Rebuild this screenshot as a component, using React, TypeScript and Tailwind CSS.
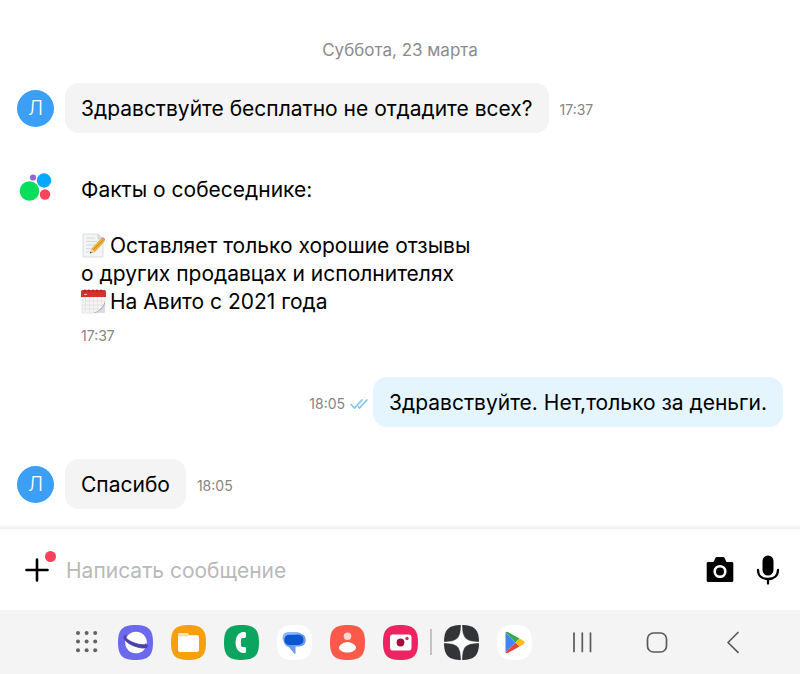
import type { ReactNode } from 'react';

const SQUIRCLE = 'M0 17.5C0 4.5 4.5 0 17.5 0S35 4.5 35 17.5 30.5 35 17.5 35 0 30.5 0 17.5Z';

function Avatar() {
  return (
    <div className="flex size-[37px] shrink-0 items-center justify-center rounded-full bg-[#3a9ff5] text-xl font-light text-white">
      Л
    </div>
  );
}

function Time({ children }: { children: ReactNode }) {
  return <time className="text-sm leading-5 text-[#858585]">{children}</time>;
}

function Incoming({ text, time }: { text: string; time: string }) {
  return (
    <div className="flex items-center">
      <Avatar />
      <p className="ml-[11px] rounded-[14px] bg-[#f4f4f4] px-4 pt-3 pb-[10px]">{text}</p>
      <div className="ml-[11px] flex pt-1">
        <Time>{time}</Time>
      </div>
    </div>
  );
}

function MemoIcon() {
  return (
    <svg className="mr-1 inline-block align-[-5px]" width="25" height="25" viewBox="0 0 25 25" role="img" aria-label="memo">
      <path d="M2 1h15l5 5v18H2z" fill="#f3f4f5" stroke="#d3d6d8" strokeWidth=".8" />
      <path d="M17 1v5h5" fill="#dcdfe1" stroke="#c5c9cb" strokeWidth=".6" />
      <path d="M5 5h9M5 8.500h11M5 12h9M5 15.500h5M5 19h4" stroke="#d2d8de" strokeWidth=".9" />
      <path d="M9 20.500l1.500-5L20 5.500l3.500 3.200L14 19z" fill="#e9b23c" />
      <path d="M12 17L22 7.200" stroke="#c98a1c" strokeWidth="1" />
      <path d="M20 5.500l1.200-1.200c1-.8 3.500 1.400 2.800 2.600l-.9 1.700z" fill="#e58d84" />
      <path d="M9 20.500l1.500-5L14 19z" fill="#eed4a3" />
      <path d="M9 20.500l.6-2 1.400 1.300z" fill="#3c3c3c" />
    </svg>
  );
}

function CalendarIcon() {
  return (
    <svg className="mr-1 inline-block align-[-5px]" width="25" height="25" viewBox="0 0 25 25" role="img" aria-label="calendar">
      <path d="M1 6h23v12l-7 6H1z" fill="#f6f6f6" stroke="#dadada" strokeWidth=".6" />
      <path d="M4.500 8v15M8.500 8v15M12.500 8v15M16.500 8v13M20.500 8v9M1 12h23M1 16h22M1 20h17" stroke="#e0e0e0" strokeWidth=".8" />
      <path d="M24 12c-2 6-6 10-12 12h5.500L24 19z" fill="#a9adaf" />
      <path d="M24 15c-2 4-5 7-10 9h9q1 0 1-1z" fill="#dadddf" />
      <path d="M0 2.500Q0 1 1.500 1h22Q25 1 25 2.500V8H0z" fill="#d2342c" />
      <path d="M4 .5v2.500M8 .5v2.500M12 .5v2.500M16 .5v2.500M20 .5v2.500" stroke="#8e2520" strokeWidth="1.200" />
      <path d="M3 5.500h3" stroke="#f1c2bd" />
    </svg>
  );
}

function AppButton({ label, fill, children }: { label: string; fill: string; children: ReactNode }) {
  return (
    <button type="button" aria-label={label} className="shrink-0">
      <svg className="block" width="35" height="35" viewBox="0 0 35 35">
        <path d={SQUIRCLE} fill={fill} />
        {children}
      </svg>
    </button>
  );
}

function NavButton({ label, children }: { label: string; children: ReactNode }) {
  return (
    <button type="button" aria-label={label} className="shrink-0">
      <svg className="block" width="24" height="24" viewBox="0 0 24 24" fill="none" stroke="#5a5a5a" strokeWidth="1.700" strokeLinecap="round" strokeLinejoin="round">
        {children}
      </svg>
    </button>
  );
}

export default function App() {
  return (
    <div className="bg-white font-[Inter,'Noto_Sans',sans-serif] text-black">
      <main className="px-[17px] pt-10 text-[21px] leading-7">
        <h1 className="mb-[23px] text-center text-[17px] leading-5 text-[#8c8c8c]">Суббота, 23 марта</h1>

        <Incoming text="Здравствуйте бесплатно не отдадите всех?" time="17:37" />

        <section className="mt-[43px] flex gap-[27px]">
          <svg className="-mt-1 shrink-0" width="37" height="32" viewBox="0 0 37 32">
            <circle cx="12.500" cy="19" r="9.800" fill="#05df5c" />
            <circle cx="27" cy="8.500" r="7.200" fill="#04a9fb" />
            <circle cx="28" cy="22.500" r="5.200" fill="#fc4558" />
            <circle cx="16" cy="5.500" r="3.100" fill="#9663d8" />
          </svg>
          <div>
            <h2>Факты о собеседнике:</h2>
            <p className="mt-7"><MemoIcon />Оставляет только хорошие отзывы</p>
            <p>о других продавцах и исполнителях</p>
            <p><CalendarIcon />На Авито с 2021 года</p>
            <div className="mt-[10px] flex"><Time>17:37</Time></div>
          </div>
        </section>

        <div className="mt-[31px] mb-8 flex items-center justify-end">
          <div className="flex items-center gap-[5px] pt-1">
            <Time>18:05</Time>
            <svg width="18" height="12" viewBox="0 0 18 12" fill="none" stroke="#83c6ec" strokeWidth="1.700" strokeLinecap="round" aria-label="read" role="img">
              <path d="M1 6.500L4.500 10 12 2M8.500 9L9.500 10 17 2" />
            </svg>
          </div>
          <p className="ml-[5px] rounded-[14px] bg-[#e5f5fe] px-4 pt-3 pb-[10px]">Здравствуйте. Нет,только за деньги.</p>
        </div>

        <Incoming text="Спасибо" time="18:05" />
      </main>

      <div className="mt-[15px] h-[5px] bg-linear-to-b from-white to-[#eeeeee]" />
      <form className="flex h-[81px] items-center pr-5 pl-[25px]">
        <button type="button" aria-label="Прикрепить" className="relative shrink-0">
          <svg className="block" width="24" height="24" viewBox="0 0 24 24" stroke="#000" strokeWidth="2.600" strokeLinecap="round">
            <path d="M12 1.500v21M1.500 12h21" />
          </svg>
          <span className="absolute -top-[7px] -right-[7px] size-[11px] rounded-full bg-[#f94159]" />
        </button>
        <input aria-label="Написать сообщение" placeholder="Написать сообщение" className="mx-[17px] min-w-0 flex-1 pt-[2px] text-[21px] leading-7 outline-none placeholder:text-[#b9b9b9]" />
        <div className="flex shrink-0 items-center gap-[22px]">
          <button type="button" aria-label="Камера">
            <svg className="block" width="28" height="28" viewBox="0 0 28 28">
              <path d="M2 6H7.500l2-4.200Q9.900 1 10.800 1h6.400q.9 0 1.300.8l2 4.200H26q1.300 0 1.300 1.300v17.400Q27.300 26 26 26H2Q.7 26 .7 24.700V7.300Q.7 6 2 6Z" />
              <circle cx="14" cy="15.500" r="5.300" fill="none" stroke="#fff" strokeWidth="2.600" />
            </svg>
          </button>
          <button type="button" aria-label="Голосовое сообщение">
            <svg className="block" width="24" height="30" viewBox="0 0 24 30">
              <rect x="6.500" y=".5" width="11" height="20" rx="5.500" />
              <path d="M2 15c0 5.500 4 9 10 9s10-3.500 10-9M12 24.500v4" fill="none" stroke="#000" strokeWidth="2.300" strokeLinecap="round" />
            </svg>
          </button>
        </div>
      </form>

      <nav className="flex h-16 items-center bg-[#f4f4f4] pl-[75px]">
        <button type="button" aria-label="Приложения" className="mr-[19px] shrink-0">
          <svg className="block" width="24" height="24" viewBox="0 0 24 24" fill="#626262">
            {[3, 11.6, 20.200].map((y) => [3, 11.6, 20.200].map((x) => <circle key={`${x}-${y}`} cx={x} cy={y} r="2" />))}
          </svg>
        </button>
        <div className="flex gap-[18px]">
          <AppButton label="Браузер" fill="#6c69ee">
            <circle cx="18" cy="17.500" r="10.800" fill="#fff" />
            <path d="M8.300 10.500C4.500 10.500 5 14.500 11 18.500c7 4.500 18 6 18.500 3 .2-1.200-.8-2.200-1.800-2.800 0 2-8 1-14.200-2C8 14 7 12 8.300 10.500Z" fill="#4a3fa6" stroke="#4a3fa6" strokeWidth=".8" />
          </AppButton>
          <AppButton label="Файлы" fill="#f8a00a">
            <path d="M7 10q0-2 2-2h6.500q1.300 0 1.800 1l.7 1.200H26q2 0 2 2V25q0 2-2 2H9q-2 0-2-2Z" fill="#fff" />
            <path d="M7 11V10q0-2 2-2h6.500q1.300 0 1.800 1l.7 1.200-1.200 1.300H8q-1 0-1 1Z" fill="#fce2aa" />
          </AppButton>
          <AppButton label="Телефон" fill="#0ba560">
            <path d="M19.500 7h1q1.500 0 1.500 1.500v3q0 1.400-1.400 1.400h-2q-1.300 0-1.500 1.300-.5 3.300 0 6.600.2 1.300 1.500 1.300h2q1.400 0 1.400 1.400v3q0 1.500-1.500 1.500h-1C9 28 9 7 19.500 7Z" fill="#fff" />
          </AppButton>
          <AppButton label="Сообщения" fill="#fff">
            <path d="M11.500 7H19q5 0 6.500 3.500L24 18 10 19.500Q5.500 17 5.500 13q0-6 6-6Z" fill="#8fb4fb" />
            <path d="M20 8.500h2q6.700 0 6.700 6.500 0 6.500-6.700 6.500h-3.500V28.500q-.3.800-1 .2L11.800 22q-4-1-4.800-5Z" fill="#6d9bf4" />
            <rect x="7.300" y="9.800" width="19.200" height="10.200" rx="5" fill="#0b57d0" />
          </AppButton>
          <AppButton label="Контакты" fill="#fb5a4b">
            <circle cx="17.500" cy="11.200" r="3.800" fill="#ffd6d1" />
            <path d="M17.500 17c4 0 8.500 3.200 8.500 5.700 0 2.600-4 4.800-8.500 4.800S9 25.300 9 22.700c0-2.500 4.500-5.700 8.500-5.700Z" fill="#fff" />
          </AppButton>
          <AppButton label="Камера телефона" fill="#ed2461">
            <rect x="7" y="9.500" width="21.500" height="16" rx="2.800" fill="#fff" />
            <circle cx="17.500" cy="17.500" r="3.900" fill="#9d123d" />
            <circle cx="24" cy="13.500" r="1.700" fill="#c4325e" />
          </AppButton>
        </div>
        <div className="mx-3 h-[26px] w-[2px] shrink-0 bg-[#c2c2c2]" />
        <div className="flex gap-[18px]">
          <AppButton label="Дзен" fill="#333437">
            <path d="M17.100 0h.8c.2 13 3.500 16.900 17.100 17.100v.8c-13.600.2-16.900 3.500-17.100 17.100h-.8C16.900 21.400 13.600 18.100 0 17.900v-.8C13.600 16.900 16.900 13 17.100 0Z" fill="#fff" stroke="#fff" strokeWidth=".5" />
          </AppButton>
          <AppButton label="Google Play" fill="#fff">
            <path d="M8.500 7.500v20L18.500 17.500Z" fill="#4285f4" />
            <path d="M8.500 7.500q1-1.300 2.800-.3L22.500 13.500l-4 4Z" fill="#34a853" />
            <path d="M8.500 27.500q1 1.300 2.800.3L22.500 21.500l-4-4Z" fill="#e8453c" />
            <path d="M22.500 13.500l4.300 2.600q1.700 1.400 0 2.800l-4.300 2.600-4-4Z" fill="#fbbc15" />
          </AppButton>
        </div>
        <div className="ml-[38px] flex gap-[51px]">
          <NavButton label="Недавние"><path d="M4 3v18.500M12.300 3v18.500M20.500 3v18.500" /></NavButton>
          <NavButton label="Домой"><rect x="2.500" y="3" width="19" height="19" rx="6" /></NavButton>
          <NavButton label="Назад"><path d="M18 2.500L8 12.500l10 9.800" /></NavButton>
        </div>
      </nav>
    </div>
  );
}
